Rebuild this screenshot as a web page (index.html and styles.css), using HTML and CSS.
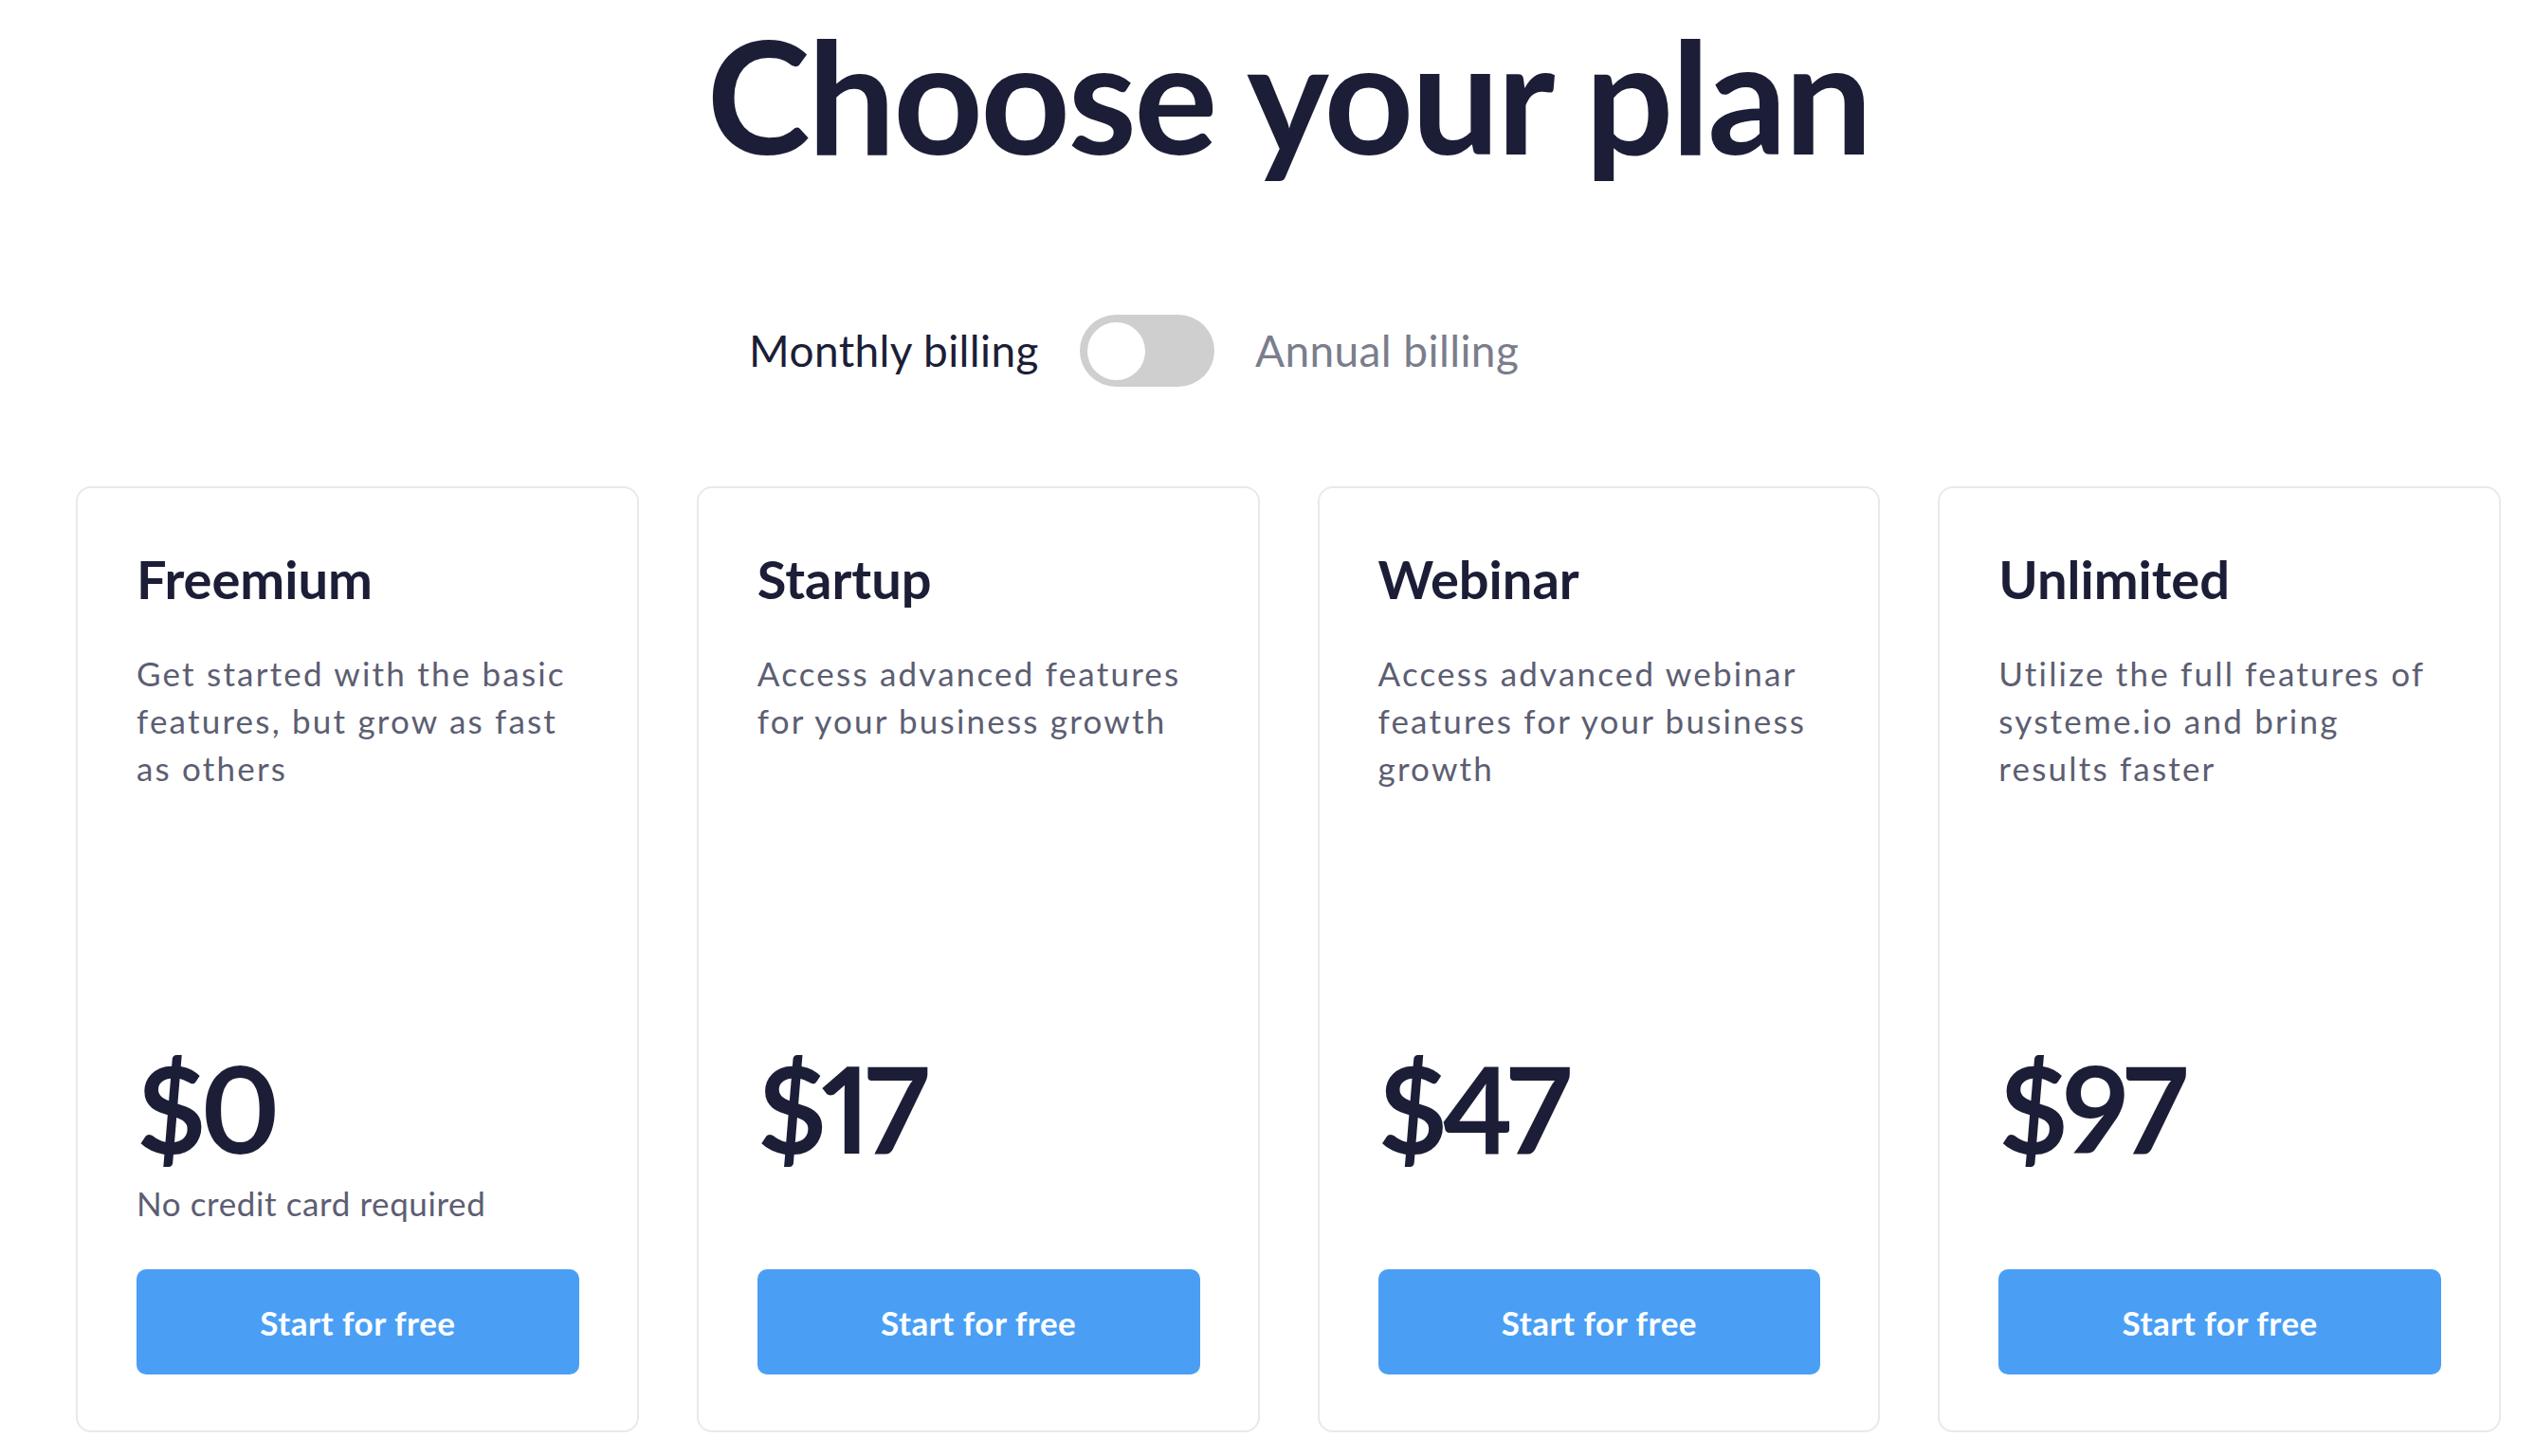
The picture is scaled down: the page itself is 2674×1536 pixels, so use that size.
FILE: index.html
```html
<!DOCTYPE html>
<html lang="en">
<head>
<meta charset="utf-8">
<title>Choose your plan</title>
<link rel="stylesheet" href="styles.css">
</head>
<body>
<main class="page">
  <h1 class="title">Choose your plan</h1>
  <div class="billing">
    <span class="billing-label billing-label--active">Monthly billing</span>
    <button class="switch" type="button" aria-label="Toggle annual billing"><span class="switch-knob"></span></button>
    <span class="billing-label">Annual billing</span>
  </div>
  <section class="plans">
    <article class="plan">
      <h2 class="plan-name">Freemium</h2>
      <p class="plan-desc">Get started with the basic features, but grow as fast as others</p>
      <div class="plan-bottom">
        <div class="plan-price">$0</div>
        <p class="plan-note">No credit card required</p>
        <a class="plan-btn" href="#">Start for free</a>
      </div>
    </article>
    <article class="plan">
      <h2 class="plan-name">Startup</h2>
      <p class="plan-desc">Access advanced features for your business growth</p>
      <div class="plan-bottom">
        <div class="plan-price">$17</div>
        <p class="plan-note"></p>
        <a class="plan-btn" href="#">Start for free</a>
      </div>
    </article>
    <article class="plan">
      <h2 class="plan-name">Webinar</h2>
      <p class="plan-desc">Access advanced webinar features for your business growth</p>
      <div class="plan-bottom">
        <div class="plan-price">$47</div>
        <p class="plan-note"></p>
        <a class="plan-btn" href="#">Start for free</a>
      </div>
    </article>
    <article class="plan">
      <h2 class="plan-name">Unlimited</h2>
      <p class="plan-desc">Utilize the full features of systeme.io and bring results faster</p>
      <div class="plan-bottom">
        <div class="plan-price">$97</div>
        <p class="plan-note"></p>
        <a class="plan-btn" href="#">Start for free</a>
      </div>
    </article>
  </section>
</main>
</body>
</html>
```
FILE: styles.css
```css
* { box-sizing: border-box; }
html, body { margin: 0; padding: 0; background: #ffffff; }
body {
  font-family: Lato, "Noto Sans", sans-serif;
  color: #1c1e37;
}
.page {
  padding: 0 36px 0 80px;
}
.title {
  margin: 0;
  text-align: center;
  font-size: 165px;
  line-height: 1.2;
  font-weight: 700;
  color: #1c1e37;
  letter-spacing: -2.7px;
}
.billing {
  display: flex;
  align-items: center;
  gap: 43px;
  margin: 134px 0 0 710px;
  height: 76px;
}
.billing-label {
  font-size: 46px;
  line-height: 1;
  color: #7b7d8c;
  letter-spacing: 0.4px;
}
.billing-label--active { color: #1c1e37; }
.switch {
  display: flex;
  align-items: center;
  width: 142px;
  height: 76px;
  padding: 0 8px;
  border: 0;
  border-radius: 38px;
  background: #cfcfcf;
  cursor: pointer;
}
.switch-knob {
  width: 61px;
  height: 61px;
  border-radius: 50%;
  background: #ffffff;
}
.plans {
  display: grid;
  grid-template-columns: repeat(4, 1fr);
  gap: 61px;
  margin-top: 105px;
}
.plan {
  display: flex;
  flex-direction: column;
  min-height: 998px;
  padding: 62px 61px 59px 62px;
  border: 2px solid #e9e9ec;
  border-radius: 16px;
  background: #ffffff;
}
.plan-name {
  margin: 0;
  font-size: 56px;
  line-height: 1.2;
  font-weight: 700;
  color: #1c1e37;
}
.plan-desc {
  margin: 41px 0 0;
  font-size: 35px;
  line-height: 50px;
  letter-spacing: 2.2px;
  color: #5c5e72;
}
.plan-bottom {
  margin-top: auto;
  display: flex;
  flex-direction: column;
}
.plan-price {
  font-size: 126px;
  line-height: 1;
  font-weight: 700;
  color: #1c1e37;
  font-variant-numeric: proportional-nums;
  font-feature-settings: "pnum" 1;
  letter-spacing: -6px;
}
.plan-note {
  margin: 12px 0 0;
  min-height: 50px;
  font-size: 35px;
  line-height: 50px;
  letter-spacing: 0.6px;
  color: #5c5e72;
}
.plan-btn {
  display: flex;
  align-items: center;
  justify-content: center;
  margin-top: 45px;
  height: 111px;
  border-radius: 10px;
  background: #4a9ff5;
  color: #ffffff;
  font-size: 35px;
  font-weight: 700;
  letter-spacing: 0.5px;
  text-decoration: none;
}
```
